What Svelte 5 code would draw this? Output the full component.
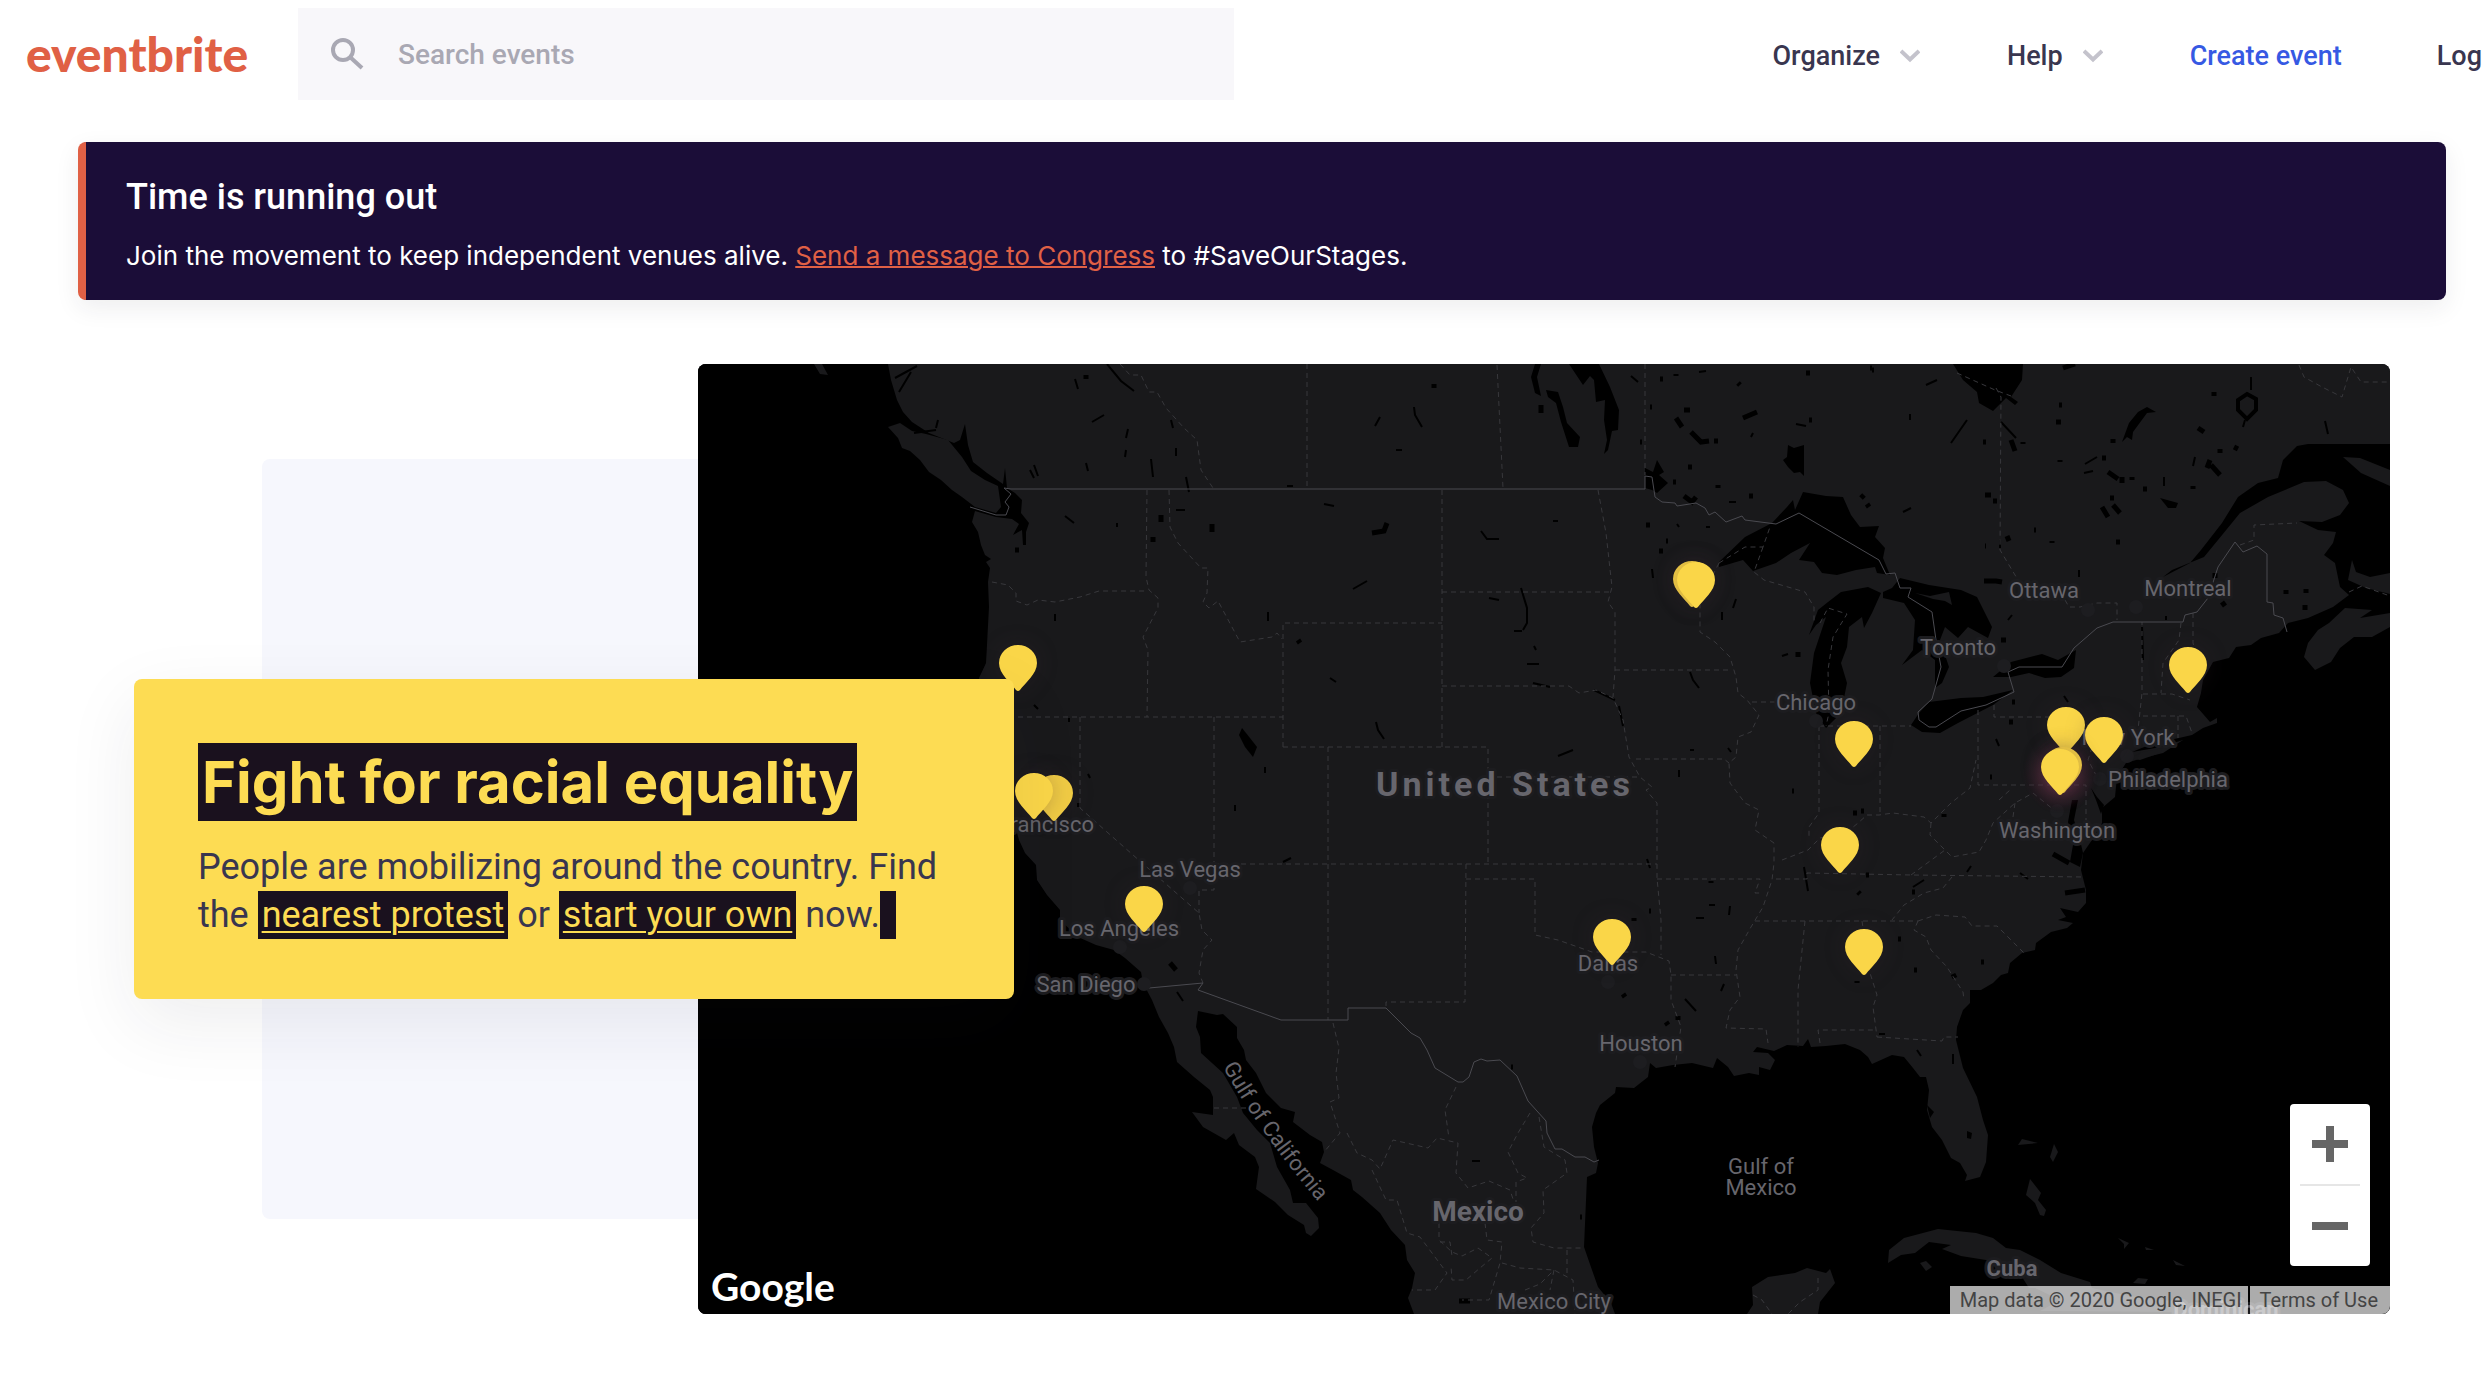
<script>
  const navLinks = [
    { label: 'Organize', menu: true },
    { label: 'Help', menu: true },
    { label: 'Create event', accent: true },
    { label: 'Log' },
  ];

  const cities = [
    { name: 'Ottawa', x: 2044, y: 598, dot: [2088, 610] },
    { name: 'Montreal', x: 2188, y: 596, dot: [2136, 607] },
    { name: 'Toronto', x: 1958, y: 655, dot: [2004, 666] },
    { name: 'Chicago', x: 1816, y: 710, dot: [1816, 721] },
    { name: 'New York', x: 2128, y: 745, dot: [2127, 756] },
    { name: 'Philadelphia', x: 2168, y: 787, dot: [2100, 779] },
    { name: 'Washington', x: 2057, y: 838, dot: [2057, 811] },
    { name: 'San Francisco', x: 1025, y: 832 },
    { name: 'Las Vegas', x: 1190, y: 877, dot: [1190, 888] },
    { name: 'Los Angeles', x: 1119, y: 936, dot: [1120, 947] },
    { name: 'San Diego', x: 1086, y: 992, dot: [1144, 984] },
    { name: 'Dallas', x: 1608, y: 971, dot: [1608, 982] },
    { name: 'Houston', x: 1641, y: 1051, dot: [1640, 1062] },
    { name: 'Mexico City', x: 1554, y: 1309 },
  ];

  const pins = [
    { x: 1018, y: 691 },
    { x: 1054, y: 821, under: true },
    { x: 1034, y: 819 },
    { x: 1144, y: 932 },
    { x: 1612, y: 965 },
    { x: 1864, y: 975 },
    { x: 1840, y: 873 },
    { x: 1854, y: 767 },
    { x: 1692, y: 607, under: true },
    { x: 1696, y: 608 },
    { x: 2188, y: 693 },
    { x: 2066, y: 753 },
    { x: 2104, y: 763 },
    { x: 2063, y: 793, under: true },
    { x: 2060, y: 795, hot: true },
  ];

  // Small lakes, drawn as short tapered strokes.
  const slivers =
    'M1075 379l3 10M1107 364l14 17 13 10M1092 422l12-7M1128 429l-2 9M1126 450l-1 7M1151 459l2 18M1176 448v8M1186 477l3 15M1171 420l2 8M1034 465l4 11M1086 463l2 8M1065 516l9 7M1117 523v4M1055 614v7M1034 705l4 4M1069 718v4M1088 774l2 4M1078 803v4M1235 805v6M1265 767v6M1268 612v9M1287 486h6M1176 510h9M1414 407l1 8 7 12M1380 417l-5 9M1396 450h6M1324 504l10 2M1481 531l6 8h12M1553 521h5M1353 589l14-8M1521 588l6 20v15l-4 7M1489 598l10 2M1514 631h8M1330 678l6 4M1376 722l2 8 6 9M1534 646l2 4M1527 664h12M1533 683l17 4M1594 690l21 10M1619 706l4 20M1558 756l15-6M1652 569l1 9M1677 524l2 3M1706 527h4M1736 599l-3 9M1722 612v8M1690 672l3 8 6 8M1782 656l6-2M1690 750h4M1728 748l3 4M1679 770v7M1631 376l7 6M1699 372l7-1M1729 502h7M1753 433l-2 4M1796 424l10 2M1910 414v6M1967 420l-16 23M2001 422l15 16M1926 385l11-5M2251 377v13M2245 420l-2 7M2325 421l3 13M2085 464l12-7M2084 473l9-2M2164 477v9M2195 457l-2 9M1903 512l8-4M2000 540v8M2079 570v7M2008 620l4-5M2142 625l1 35M2166 616v4M2064 696l4 6M1996 739l3 7M1647 859l3 9M1709 905h6M1730 906l-1 9M1696 918h8M1715 956l1 8M1724 984l-3 7M1685 999l11 12M1472 1161h8M1804 867l4 24M1967 872l4-6M1913 887l11-7M2020 873l8 6M1917 1050l4 6M1953 1054v10M1879 1034h6M1177 992l6 9M1283 862l8-4M914 433l22-3M936 428l2-8M1030 470l4 8M895 378l22-12M899 392l12-20';
  const ponds =
    'M1086 375v4M1161 515v7M1153 537v5M1212 524v8M1015 550h4M1434 384v4M1372 533l12-2 3-8M1298 640l2 3M1541 405v8M1646 525h4M1659 551h4M1666 541h2M1798 652v5M1792 791h2M1853 813h4M1861 811h3M1660 379h3M1676 374v2M1738 383l2 2M1806 373h4M1870 368h2M1684 410h6M1676 418l6 9M1691 432l10 10 8-1M1714 441h4M1743 418l14-6M1809 420h3M1650 407h2M1688 467h4M1718 485v3M1749 496h4M1684 496l8 6 4-5M1861 498l3-3M1867 504l2 3M1673 482h3M1640 442h2M1872 370h2M2011 440l4 11M1983 442h3M2023 442v2M2056 422h5M2059 405h3M2063 368l12-4M2113 439v4M2198 428l6 4M2214 392v4M2234 447l4 2M2220 449v4M2102 458h4M2060 460v2M2108 472l10 7M2122 477v6M2132 477v3M2143 489h4M2210 460l-3 8M2211 465l9 10M2193 486v3M1985 495h6M1993 501h4M2110 498h4M2102 507l6 10M2113 505l7 8M2034 530h2M2007 536l2 5M2052 541v2M2116 542h4M1985 546h1M1984 581h12l6 1M2001 640h5M2222 602l3 4M2215 573v5M2286 590v4M2306 589v4M2305 605v5M2012 702h3M2009 722h4M1990 777h2M1944 814v3M1711 881v2M1634 918v3M1649 911h2M1623 994l2 3M1666 1022l2 3M1678 1016v4M1511 1067h2M1580 1217h2M1459 1301h11M1858 892l2 2M1866 875h3M1857 981v2M1912 892h3M1898 939h3M1914 970h3M1981 962h3M1953 974l2 4M1170 963l6 7M2053 854l16 9M2065 893l20-3';

  const seas = [
    // Pacific coast and the Gulf of California
    '698,364 888,364 891,380 897,400 903,412 912,422 929,433 954,443 960,440 965,424 968,445 973,462 987,473 1003,484 1005,468 1007,488 1015,493 1022,500 1021,513 1029,523 1026,532 1026,545 1023,545 1022,530 1013,535 1019,524 1012,519 996,517 975,511 972,522 978,532 981,545 985,555 991,559 986,562 990,568 988,582 989,607 986,663 979,678 985,720 1000,780 1012,815 1019,840 1025,853 1036,865 1037,880 1047,895 1060,910 1060,920 1078,937 1096,945 1114,950 1125,958 1141,972 1143,983 1152,1000 1159,1017 1168,1033 1174,1047 1177,1062 1194,1077 1210,1090 1213,1097 1213,1115 1192,1112 1203,1127 1226,1140 1234,1133 1239,1145 1255,1157 1259,1167 1256,1189 1275,1202 1288,1215 1304,1225 1306,1233 1311,1236 1319,1228 1318,1218 1306,1203 1293,1203 1290,1190 1277,1167 1270,1143 1257,1130 1243,1113 1237,1097 1223,1073 1201,1053 1200,1037 1196,1027 1198,1011 1217,1015 1223,1014 1237,1027 1237,1038 1244,1050 1246,1060 1256,1073 1266,1093 1281,1108 1295,1112 1293,1122 1310,1135 1322,1142 1324,1152 1320,1163 1333,1170 1351,1180 1353,1190 1362,1197 1380,1213 1391,1230 1405,1245 1407,1260 1415,1273 1412,1288 1408,1298 1414,1314 698,1314',
    // Gulf of Mexico, Atlantic and the Gulf of St Lawrence
    '1615,1314 1611,1303 1598,1287 1592,1270 1584,1247 1587,1177 1596,1173 1598,1163 1594,1147 1592,1127 1596,1113 1600,1105 1615,1093 1616,1087 1634,1088 1648,1077 1650,1063 1656,1068 1673,1065 1692,1063 1713,1068 1717,1058 1728,1067 1734,1076 1749,1073 1759,1075 1759,1067 1770,1070 1775,1060 1768,1053 1753,1052 1757,1047 1774,1051 1787,1045 1803,1046 1808,1039 1811,1047 1826,1046 1845,1044 1860,1050 1868,1057 1872,1064 1892,1055 1904,1057 1913,1068 1920,1077 1926,1077 1929,1090 1927,1110 1932,1127 1942,1140 1951,1158 1960,1163 1967,1175 1965,1181 1980,1177 1986,1162 1988,1135 1983,1120 1977,1097 1963,1068 1956,1040 1957,1027 1963,1010 1970,1003 1970,990 1981,990 1993,983 2001,975 2008,973 2010,963 2022,953 2035,950 2036,943 2051,932 2067,928 2073,923 2058,920 2066,917 2060,908 2078,912 2086,903 2086,890 2081,870 2083,853 2092,840 2102,823 2102,808 2115,797 2117,777 2126,763 2143,758 2163,753 2183,740 2161,747 2132,752 2154,743 2179,738 2192,735 2203,728 2217,723 2217,718 2210,722 2197,707 2201,693 2203,680 2213,662 2229,658 2236,647 2251,645 2261,638 2279,633 2288,623 2308,618 2333,607 2349,595 2340,587 2335,563 2324,555 2333,543 2336,532 2318,530 2299,521 2322,522 2340,515 2349,503 2343,490 2326,481 2304,482 2268,497 2240,513 2218,540 2204,557 2172,570 2163,577 2190,563 2201,550 2222,523 2238,497 2258,483 2278,478 2283,460 2297,446 2308,444 2390,444 2390,1314',
  ];

  const islands = [
    '888,427 900,423 912,431 926,434 948,440 962,457 971,471 985,480 998,486 1001,507 996,513 975,507 962,497 952,490 941,480 929,472 920,460 910,451 902,448 898,438',
    '814,364 822,364 828,375 820,374',
    '2343,457 2360,458 2390,470 2390,486 2361,473',
    '2390,627 2372,637 2354,637 2340,648 2331,662 2315,670 2304,657 2308,643 2318,630 2329,623 2345,608 2372,610 2360,618 2390,613',
    '2352,560 2356,572 2370,577 2390,573 2390,594 2366,588 2348,580',
    '2130,758 2143,752 2163,748 2160,753 2140,760',
    '1747,1314 1753,1305 1752,1287 1768,1277 1795,1273 1807,1268 1826,1273 1830,1269 1835,1283 1820,1302 1818,1314',
    '1888,1263 1889,1250 1904,1238 1938,1229 1976,1233 1993,1238 2006,1248 2020,1250 2040,1260 2061,1273 2090,1282 2092,1288 2029,1288 2022,1277 1986,1260 1961,1256 1942,1249 1951,1245 1929,1242 1915,1253 1901,1255',
    '1920,1263 1926,1261 1932,1267 1926,1271',
    '2018,1145 2022,1139 2038,1143',
    '2054,1144 2058,1152 2053,1162 2050,1157',
    '2030,1179 2041,1193 2038,1200 2046,1210 2044,1216 2040,1215 2035,1203 2026,1195',
    '2133,1283 2138,1278 2148,1279 2145,1284',
    '2173,1260 2185,1266 2176,1265',
    '2145,1247 2154,1250 2146,1250',
    '2118,1238 2129,1243 2124,1249 2124,1244',
    '2035,1288 2092,1288 2130,1296 2180,1302 2186,1312 2040,1311 2060,1300',
  ];

  const lakes = [
    // Superior
    '1719,562 1745,537 1772,523 1787,507 1793,500 1795,510 1803,492 1826,496 1843,497 1851,515 1860,527 1879,526 1875,537 1885,548 1883,558 1890,575 1877,573 1875,567 1856,570 1837,575 1822,573 1814,562 1799,560 1810,543 1791,553 1776,563 1753,571 1743,560 1719,567',
    // Michigan
    '1809,635 1818,610 1828,602 1841,592 1868,587 1881,593 1872,613 1864,628 1862,617 1849,627 1847,647 1841,663 1847,683 1841,713 1826,728 1816,713 1810,683 1814,653 1826,617 1816,625',
    // Huron
    '1883,592 1892,588 1900,578 1929,585 1961,590 1977,597 1992,627 1988,638 1968,627 1958,638 1945,627 1940,640 1949,667 1942,683 1935,688 1935,660 1922,650 1902,665 1913,650 1915,620 1904,603 1883,598',
    // Erie
    '1911,725 1919,713 1929,702 1961,698 1983,697 2013,690 1993,705 1958,723 1940,733 1922,732',
    // Ontario
    '1993,677 2011,662 2042,654 2058,660 2076,650 2074,668 2061,677 2045,678 2029,673 2011,677',
    // Winnipeg and Manitoba
    '1535,364 1531,377 1535,393 1541,396 1537,377 1541,364',
    '1546,390 1558,392 1563,407 1567,423 1580,437 1578,447 1569,447 1561,422 1556,403 1548,397',
    '1569,364 1599,364 1610,387 1619,410 1618,430 1612,431 1608,450 1604,454 1607,440 1604,420 1605,400 1596,402 1594,380 1590,376 1583,385',
    // Nipigon
    '1788,445 1794,448 1804,445 1804,476 1800,472 1794,473 1788,467 1783,460 1787,457',
    // Lake of the Woods
    '1645,468 1653,472 1657,460 1664,472 1659,475 1668,483 1657,493 1652,490 1645,488',
    // James Bay
    '1953,364 2023,364 2022,380 2011,397 2018,402 2015,405 2006,398 1993,411 1979,403 1977,392 1963,380',
    // Great Salt Lake
    '1242,728 1250,738 1257,747 1253,757 1245,747 1239,735',
    // Saint-Jean, Mistassini, Okeechobee
    '2160,498 2178,503 2176,508 2168,508',
    '2122,442 2129,423 2138,412 2147,407 2156,412 2147,413 2133,432 2132,440 2127,437',
    '1967,1131 1972,1133 1971,1139 1967,1138',
    // Chesapeake and Delaware bays
    '2072,800 2078,800 2074,820 2080,840 2083,853 2080,867 2070,862 2073,845 2068,822',
    '2091,788 2097,797 2104,805 2101,814 2096,800',
    '1927,1105 1934,1112 1930,1118',
  ];
  const manitoulin = '1915,593 1930,596 1949,592 1952,605 1945,601 1933,599';

  const nationalBorders =
    'M1004 488L1011 489H1645V476L1652 477 1655 497 1662 502 1675 503 1677 506 1696 503 1705 508 1709 515 1715 512 1726 522 1742 516 1745 520 1776 524 1799 513 1879 560 1886 574 1895 573 1900 588H1911L1908 597 1932 612 1936 640 1941 667 1932 699 1918 712 1919 720 1929 727H1936L1961 711 1986 705 2014 692 2008 672 2019 667H2062L2074 648 2097 628 2113 622H2183L2185 615 2197 612 2208 598 2218 567 2235 542 2243 552 2257 546 2267 554V602L2273 603 2274 615 2283 618 2287 632M970 507L996 515H1006L1009 507 1005 502 1011 494 1004 488M1149 988L1203 983 1198 990 1281 1020H1348V1008H1386L1411 1033 1420 1038 1427 1050 1435 1068 1458 1082H1463L1469 1077 1474 1062 1481 1059 1487 1061 1500 1060 1517 1076 1528 1101 1546 1121 1547 1133 1555 1149H1562L1575 1157H1585L1594 1162 1599 1160';

  const stateBorders =
    'M1120 364L1130 375H1141L1149 392H1157L1166 408 1184 428 1197 440 1201 470 1213 488M1147 490L1146 577 1149 590 1158 598V608L1143 637 1148 650 1147 717M1169 490L1170 527 1178 543 1201 568H1208L1207 593 1203 602 1209 608 1218 601 1240 642 1272 637 1277 633 1282 639M992 582L1008 585 1016 593V601L1027 605 1038 600 1055 602 1080 597 1099 591H1147M1000 717H1283M1080 717V808L1116 840 1199 913 1202 930 1212 940 1203 950 1199 973 1203 983M1214 717V890H1199V913M1283 747V623H1442M1283 747H1488V864M1442 490V747M1328 747V1020M1488 777H1640M1214 864H1657M1442 592H1612M1442 686H1569L1579 693 1596 690 1613 698 1623 720 1629 757 1640 777 1652 787 1646 790 1657 803V878L1661 920V955M1598 490L1606 533 1612 587 1608 602 1615 612V670L1613 697M1615 670H1732M1719 563L1700 600V632L1715 642 1730 657 1736 677 1738 693 1747 700 1759 715 1751 732 1738 737 1736 757 1729 763 1730 783 1745 803 1759 810 1755 830 1774 843V863L1772 880 1763 907 1751 927 1738 950 1736 970 1740 997 1730 1010 1726 1028 1766 1029 1768 1043M1636 759H1724L1729 763M1752 702H1775M1657 879H1760L1755 893H1763M1466 864L1465 1002H1386V1008M1466 879H1535V935L1558 940 1592 952H1646L1669 961 1671 975V1000L1681 1027 1675 1067M1671 975H1736M1755 921H1918M1805 921L1798 990V1047M1862 921L1870 973 1877 995 1873 1007 1877 1037M1820 1043L1818 1030H1876M1877 1037L1942 1041 1944 1037H1958M1918 921L1914 930 1926 937 1931 950 1947 967 1963 992 1964 1000M1918 921L1936 915 1965 917 1972 926H1997L2024 953M1776 879H1807V873L1911 875 2085 877M1952 877L1943 888 1924 893 1904 905 1892 920M1911 875L1945 850 1952 857 1979 852 1986 840 1993 823 2015 803 2033 793 2054 810M1782 860L1808 850 1820 838 1846 833 1858 823 1867 815H1879L1893 813 1924 817 1931 823 1951 803 1970 788 1976 760M1931 823L1930 835 1945 850M1880 726V814M1819 726H1911M1819 726V813L1809 827V838M1978 710V785H2086V823M1994 705V717H2080L2096 735 2088 760 2096 775M2142 622V693L2138 730M2143 694H2172L2190 700M2143 716H2186L2192 733M2178 716V738M2181 623L2179 640 2163 663 2161 693M2193 613V643L2200 670M1996 388L2001 397 2000 550 2018 580M2240 545L2254 540V525L2297 523M2065 600L2069 607H2080L2097 603H2117V620M1957 373L1995 390 2011 396M2299 365L2304 377 2322 387 2342 397 2351 367 2361 382H2390M1307 364V489M1497 365L1503 488M1645 364V475M1719 563L1745 547H1763L1770 527M1763 547L1754 572 1764 580 1805 592 1814 607V622M1820 623L1828 608 1847 614 1833 637 1828 670 1829 713 1826 726M1333 1023L1339 1048 1336 1073 1339 1098 1330 1102 1340 1133 1324 1152M1347 1133L1357 1153 1372 1160 1380 1169 1393 1140 1428 1148 1437 1138 1458 1143 1456 1173 1468 1188 1489 1181 1510 1190 1514 1202M1456 1087L1445 1110 1449 1138M1372 1170L1386 1200H1397L1407 1233 1420 1237 1435 1257 1447 1273 1435 1290H1412M1530 1113L1518 1133 1508 1152 1518 1173 1527 1178 1516 1182V1202M1539 1117L1544 1147 1565 1160 1567 1173 1543 1190 1544 1213 1531 1228 1533 1242 1554 1248H1583M1485 1223L1487 1240 1502 1242 1500 1263 1489 1300H1462M1502 1263L1520 1268 1554 1270 1573 1280 1575 1314M1567 1250V1276M1439 1223V1240L1452 1252 1462 1256 1478 1248 1492 1258 1480 1268 1466 1280H1452L1451 1266M1440 1242H1450L1452 1256M1525 1290L1540 1284 1554 1270 1550 1290M1214 1108H1246M1818 1278V1290L1800 1302 1788 1314M1753 1295L1762 1300 1772 1314M2349 592L2362 586 2390 596M2013 817L2015 803M1999 800L2010 790';
</script>

<header class="topbar">
  <a class="brand" href="#home">eventbrite</a>
  <label class="search">
    <svg class="search-icon" viewBox="0 0 34 34" aria-hidden="true">
      <circle cx="13" cy="13" r="10" />
      <path d="M20 20L32 31" />
    </svg>
    <input type="search" placeholder="Search events" aria-label="Search events" />
  </label>
  <nav class="nav" aria-label="Main">
    {#each navLinks as link}
      {#if link.menu}
        <button class="nav-item" type="button">
          {link.label}
          <svg class="chevron" viewBox="0 0 20 14" aria-hidden="true"><path d="M1 2L10 10.500L19 2" /></svg>
        </button>
      {:else}
        <a class="nav-item" class:accent={link.accent} href="#{link.label}">{link.label}</a>
      {/if}
    {/each}
  </nav>
</header>

<main>
  <section class="notice">
    <h2>Time is running out</h2>
    <p>
      Join the movement to keep independent venues alive.
      <a href="#congress">Send a message to Congress</a> to #SaveOurStages.
    </p>
  </section>

  <section class="hero">
    <div class="backdrop"></div>

    <div class="map">
      <svg class="map-art" viewBox="698 364 1692 950" role="img" aria-label="Map of protests in the United States">
        <defs>
          <radialGradient id="glow">
            <stop offset="0.4" stop-color="#7a3550" stop-opacity="0.5" />
            <stop offset="1" stop-color="#3a1a2c" stop-opacity="0" />
          </radialGradient>
          <path id="gulf-line" d="M1223 1067Q1261 1136 1328 1213" />
        </defs>

        <rect class="land" x="698" y="364" width="1692" height="950" />
        {#each seas as points}<polygon class="water" {points} />{/each}
        {#each islands as points}<polygon class="land" {points} />{/each}
        {#each lakes as points}<polygon class="water" {points} />{/each}
        <polygon class="land" points={manitoulin} />
        <path class="ring" d="M2247 394l9 5v11l-9 9-9-9v-10z" />
        <path class="sliver" d={slivers} />
        <path class="pond" d={ponds} />
        <path class="states" d={stateBorders} />
        <path class="nations" d={nationalBorders} />

        {#each cities as city}
          {#if city.dot}<circle class="dot" cx={city.dot[0]} cy={city.dot[1]} r="7" />{/if}
        {/each}
        {#each cities as city}
          <text class="label" x={city.x} y={city.y}>{city.name}</text>
        {/each}
        <text class="label sea" x="1761" y="1174">Gulf of</text>
        <text class="label sea" x="1761" y="1195">Mexico</text>
        <text class="label sea along"><textPath href="#gulf-line">Gulf of California</textPath></text>
        <text class="label bold" x="2012" y="1276">Cuba</text>
        <text class="label bold" x="2226" y="1317">Dominican</text>
        <text class="label country" x="1478" y="1221">Mexico</text>
        <text class="label nation" x="1505" y="796">United States</text>

        {#each pins as pin}
          {#if pin.hot}<circle cx={pin.x} cy={pin.y - 20} r="38" fill="url(#glow)" />{/if}
        {/each}
        {#each pins as pin}
          <g transform="translate({pin.x} {pin.y})">
            <path
              class="pin"
              class:under={pin.under}
              d="M-2-1C-7-8-19-17-19-28a19 18 0 0 1 38 0C19-17 7-8 2-1Q0 1-2-1z"
            />
          </g>
        {/each}
      </svg>

      <span class="google">Google</span>

      <div class="zoom">
        <button type="button" aria-label="Zoom in">
          <svg viewBox="0 0 36 36" aria-hidden="true"><path d="M0 18H36M18 0V36" /></svg>
        </button>
        <button type="button" aria-label="Zoom out">
          <svg viewBox="0 0 36 36" aria-hidden="true"><path d="M0 18H36" /></svg>
        </button>
      </div>

      <div class="credits">
        <span>Map data © 2020 Google, INEGI</span>
        <a href="#terms">Terms of Use</a>
      </div>
    </div>

    <article class="card">
      <h1><mark>Fight for racial equality</mark></h1>
      <p>
        People are mobilizing around the country. Find the
        <a href="#nearest">nearest protest</a> or <a href="#start">start your own</a>
        now.<span class="caret"></span>
      </p>
    </article>
  </section>
</main>

<style>
  :global(body) {
    background: #ffffff;
    color: #39364f;
    font-family: Roboto, 'Liberation Sans', sans-serif;
    overflow-x: hidden;
  }

  .topbar {
    display: flex;
    align-items: center;
    padding: 8px 4px 8px 26px;
    background: #ffffff;
  }

  .brand {
    width: 272px;
    flex: none;
    color: #e06045;
    font: 900 48px/60px Lato, sans-serif;
    text-decoration: none;
  }

  .search {
    display: flex;
    flex: 0 1 936px;
    align-items: center;
    gap: 34px;
    box-sizing: border-box;
    height: 92px;
    padding: 0 32px;
    background: #f8f7fa;
  }

  .search-icon {
    width: 34px;
    height: 34px;
    flex: none;
    fill: none;
    stroke: #a9a8b3;
    stroke-width: 4;
  }

  .search input {
    flex: 1;
    min-width: 0;
    padding: 2px 0 0;
    border: 0;
    outline: 0;
    background: transparent;
    color: #39364f;
    font: 500 28px/40px Roboto, sans-serif;
  }

  .search input::placeholder {
    color: #a9a8b3;
    opacity: 1;
  }

  .nav {
    display: flex;
    align-items: center;
    gap: 87px;
    margin-left: auto;
    padding-top: 4px;
  }

  .nav-item {
    display: flex;
    align-items: center;
    gap: 20px;
    padding: 0;
    border: 0;
    background: none;
    color: #39364f;
    font: 500 27px/40px Roboto, sans-serif;
    text-decoration: none;
    white-space: nowrap;
  }

  .accent {
    margin-right: 8px;
    color: #3659e3;
  }

  .chevron {
    width: 20px;
    height: 14px;
    fill: none;
    stroke: #c4c3cc;
    stroke-width: 4;
  }

  .notice {
    margin: 34px 40px 0 78px;
    padding: 33px 40px 24px 40px;
    border-left: 8px solid #e06045;
    border-radius: 8px;
    background: #1b0d38;
    box-shadow: 0 8px 24px rgba(40, 44, 53, 0.08);
    color: #ffffff;
  }

  .notice h2 {
    margin: 0;
    font: 500 36px/44px Roboto, sans-serif;
  }

  .notice p {
    margin: 17px 0 0;
    font: 400 26px/40px Inter, sans-serif;
  }

  .notice a {
    color: #e06045;
    text-decoration-thickness: 2px;
  }

  .hero {
    display: grid;
    grid-template-columns: 128px 436px 316px 1fr;
    align-items: center;
    margin: 64px 96px 60px 134px;
  }

  .backdrop {
    grid-area: 1 / 2 / 2 / 4;
    height: 80%;
    border-radius: 8px;
    background: #f6f7fd;
  }

  .map {
    position: relative;
    grid-area: 1 / 3 / 2 / 5;
    overflow: hidden;
    border-radius: 8px;
    background: #000000;
  }

  .map-art {
    display: block;
    width: 100%;
  }

  .land {
    fill: #19191b;
  }

  .water {
    fill: #000000;
  }

  .sliver,
  .pond,
  .ring,
  .states,
  .nations {
    fill: none;
    stroke: #000000;
    stroke-width: 2;
  }

  .pond {
    stroke-width: 5;
  }

  .ring {
    stroke-width: 4;
  }

  .states {
    stroke: #38383c;
    stroke-width: 1;
    stroke-dasharray: 5 4;
  }

  .nations {
    stroke: #4a4a50;
    stroke-width: 1;
  }

  .dot {
    fill: #1d1d20;
  }

  .label {
    fill: #67666d;
    stroke: #1c1c1f;
    stroke-width: 6;
    stroke-linejoin: round;
    paint-order: stroke;
    font: 400 22px Roboto, sans-serif;
    text-anchor: middle;
  }

  .sea {
    stroke: none;
  }

  .along {
    text-anchor: start;
  }

  .bold {
    font-weight: 700;
  }

  .country {
    font-size: 28px;
    font-weight: 700;
  }

  .nation {
    font-size: 34px;
    font-weight: 700;
    letter-spacing: 4px;
  }

  .pin {
    fill: #fad648;
    filter: drop-shadow(0 0 10px rgba(60, 40, 50, 0.25));
  }

  .under {
    fill: #f1cc45;
  }

  .google {
    position: absolute;
    bottom: 2px;
    left: 13px;
    color: #ffffff;
    font: 700 39px/52px Lato, sans-serif;
  }

  .zoom {
    position: absolute;
    right: 20px;
    bottom: 48px;
    width: 80px;
    border-radius: 4px;
    background: #ffffff;
  }

  .zoom button {
    display: flex;
    align-items: center;
    justify-content: center;
    width: 60px;
    height: 80px;
    margin: 0 10px;
    padding: 0;
    border: 0;
    background: none;
  }

  .zoom button + button {
    border-top: 2px solid #e6e6e6;
    height: 82px;
  }

  .zoom svg {
    width: 36px;
    height: 36px;
    stroke: #666666;
    stroke-width: 8;
  }

  .credits {
    position: absolute;
    right: 0;
    bottom: 0;
    display: flex;
    gap: 2px;
    color: #444444;
    font: 400 20px/28px Roboto, sans-serif;
  }

  .credits span,
  .credits a {
    padding: 0 12px 0 10px;
    background: rgba(245, 245, 245, 0.7);
    color: inherit;
    text-decoration: none;
  }

  .credits span {
    padding-right: 6px;
  }

  .card {
    grid-area: 1 / 1 / 2 / 4;
    z-index: 1;
    padding: 64px 64px 60px;
    border-radius: 8px;
    background: #fddc53;
    box-shadow: 0 24px 72px rgba(40, 44, 53, 0.08);
  }

  .card h1 {
    margin: 0;
    color: #fddc53;
    font: 700 58px/78px Inter, sans-serif;
    white-space: nowrap;
  }

  .card mark {
    display: inline-block;
    padding: 0 4px;
    background: #1a111e;
    color: inherit;
  }

  .card p {
    margin: 22px 0 0;
    font: 400 36px/48px Roboto, sans-serif;
  }

  .card a {
    display: inline-block;
    padding: 0 4px;
    background: #1a111e;
    color: #fddc53;
    text-decoration-thickness: 2px;
    text-underline-offset: 4px;
  }

  .caret {
    display: inline-block;
    width: 16px;
    height: 48px;
    background: #1a111e;
    vertical-align: bottom;
  }
</style>
